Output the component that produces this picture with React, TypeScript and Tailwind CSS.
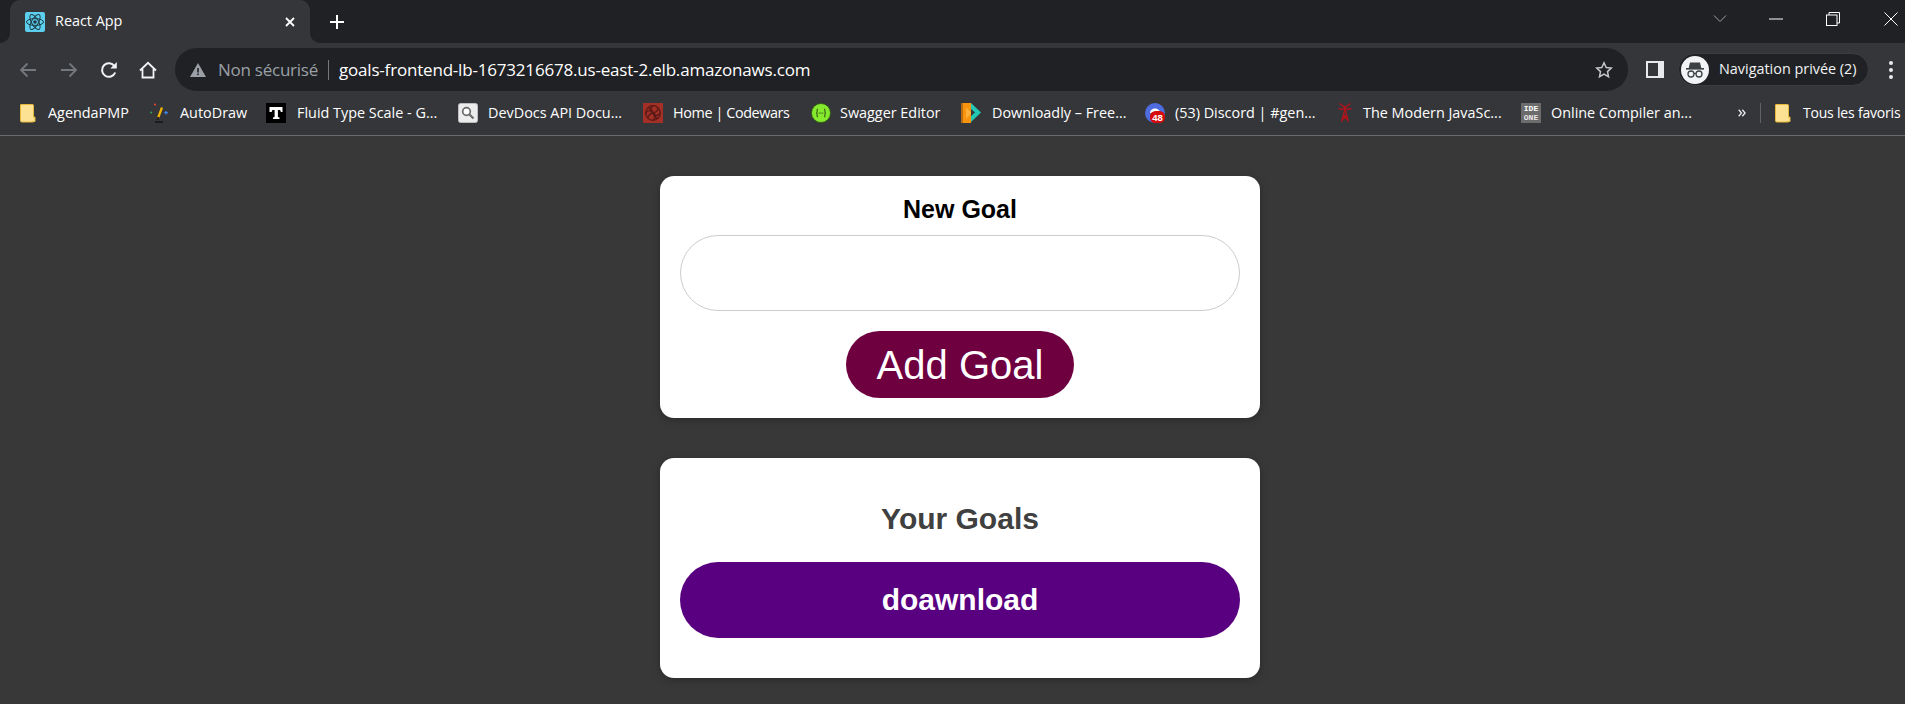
import React from "react";

const ui = "font-['Open_Sans','Noto_Sans',sans-serif]";

function Folder() {
  return (
    <svg width="20" height="20" viewBox="0 0 20 20">
      <path d="M3 1.500h11.500a1 1 0 0 1 1 1V19H3.800A1.300 1.300 0 0 1 2.500 17.700V2a.5.5 0 0 1 .5-.5z" fill="#fde293" stroke="#e8b93b" strokeWidth="1" />
      <path d="M15 14h2v4.500h-3" fill="#fde293" stroke="#e8b93b" strokeWidth="1" />
    </svg>
  );
}

function ReactIcon() {
  return (
    <svg width="20" height="20" viewBox="0 0 20 20">
      <rect width="20" height="20" rx="2" fill="#5ccfee" />
      <g fill="none" stroke="#1f3a44" strokeWidth="1">
        <ellipse cx="10" cy="10" rx="8.500" ry="3.400" />
        <ellipse cx="10" cy="10" rx="8.500" ry="3.400" transform="rotate(60 10 10)" />
        <ellipse cx="10" cy="10" rx="8.500" ry="3.400" transform="rotate(120 10 10)" />
      </g>
      <circle cx="10" cy="10" r="1.800" fill="#1f3a44" />
    </svg>
  );
}

function AutoDrawIcon() {
  return (
    <svg width="20" height="20" viewBox="0 0 20 20">
      <path d="M12 4.500 8 15" stroke="#f5b400" strokeWidth="2.200" />
      <path d="M8.400 14 7.400 17" stroke="#222" strokeWidth="2" />
      <rect x="5" y="18" width="8" height="2" fill="#1c1c1c" />
      <circle cx="5" cy="1.500" r="1.100" fill="#ea4335" />
      <circle cx="1.200" cy="9.500" r="1" fill="#34a853" />
      <path d="M16 8v3.500M14.300 9.700h3.500" stroke="#4285f4" strokeWidth="1.200" />
    </svg>
  );
}

function TIcon() {
  return (
    <svg width="20" height="20" viewBox="0 0 20 20">
      <rect width="20" height="20" fill="#000" />
      <path d="M3.500 4h13v5h-1.600l-.8-2h-2.200v7l1.600.6V16H7v-1.400l1.600-.6V7H6.400l-.8 2H3.500z" fill="#fff" />
    </svg>
  );
}

function DevDocsIcon() {
  return (
    <svg width="20" height="20" viewBox="0 0 20 20">
      <rect x=".5" y=".5" width="19" height="19" rx="2" fill="#ececec" stroke="#bdbdbd" />
      <circle cx="8.500" cy="8.500" r="3.800" fill="#fff" stroke="#6b6b6b" strokeWidth="1.700" />
      <path d="m11.500 11.500 4 4" stroke="#6b6b6b" strokeWidth="2.200" />
    </svg>
  );
}

function CodewarsIcon() {
  return (
    <svg width="20" height="20" viewBox="0 0 20 20">
      <rect width="20" height="20" fill="#a32f27" />
      <g fill="none" stroke="#5a1a16" strokeWidth="1.300">
        <circle cx="10" cy="10" r="7.300" />
        <path d="M10 2.700C6.500 5.500 7 8.500 10 10s3.500 4.500 0 7.300" />
        <path d="M2.700 10C5.500 6.500 8.500 7 10 10s4.500 3.500 7.300 0" />
        <path d="M4.800 4.800C8.500 5 9.500 8 10 10s1.500 5 5.200 5.200" />
        <path d="M15.200 4.800C15 8.500 12 9.500 10 10s-5 1.500-5.200 5.200" />
      </g>
    </svg>
  );
}

function SwaggerIcon() {
  return (
    <svg width="20" height="20" viewBox="0 0 20 20">
      <circle cx="10" cy="10" r="9.500" fill="#85ea2d" stroke="#2f5a12" strokeWidth=".8" />
      <path d="M7 6c-1.200 0-.9 1.300-.9 2.500 0 .9-.4 1.500-.9 1.500.5 0 .9.600.9 1.500 0 1.200-.3 2.500.9 2.500M13 6c1.200 0 .9 1.300.9 2.500 0 .9.400 1.500.9 1.500-.5 0-.9.600-.9 1.500 0 1.200.3 2.500-.9 2.500" fill="none" stroke="#20350e" strokeWidth="1" />
      <circle cx="8.300" cy="10" r=".6" fill="#20350e" />
      <circle cx="10" cy="10" r=".6" fill="#20350e" />
      <circle cx="11.700" cy="10" r=".6" fill="#20350e" />
    </svg>
  );
}

function DownloadlyIcon() {
  return (
    <svg width="20" height="20" viewBox="0 0 20 20">
      <rect x="0" y="0" width="2" height="20" fill="#b96f10" />
      <rect x="2" y="0" width="8" height="20" fill="#f7930d" />
      <path d="M5 4.500 10 9v2l-5 4.500z" fill="#fdb03a" />
      <path d="M10 0l10 9.500L10 19v-6l4-3.500L10 6z" fill="#23c8b4" />
    </svg>
  );
}

function DiscordIcon() {
  return (
    <svg width="20" height="20" viewBox="0 0 20 20">
      <circle cx="10" cy="10" r="10" fill="#4f6be0" />
      <path d="M5 10c0-3 2.500-4.500 5-4.500S15 7 15 10z" fill="#fff" />
      <rect x="5" y="8" width="15" height="12" rx="5.500" fill="#d60a0a" />
      <text x="12.500" y="17.500" fontSize="9.500" fontWeight="700" fill="#fff" textAnchor="middle" fontFamily="Liberation Sans, sans-serif">48</text>
    </svg>
  );
}

function TowerIcon() {
  return (
    <svg width="20" height="20" viewBox="0 0 20 20" fill="none" stroke="#b3131b" strokeWidth="1.300">
      <path d="M10 6 6.500 19M10 6l3.500 13M8 13h4M7 17l5-4M13 17l-5-4" />
      <path d="M9.500 4 4.500.5M10.500 4l5-3.500M8.500 6.500l-5-1M11.500 6.500l5-1" />
      <circle cx="10" cy="5" r="1" fill="#b3131b" />
    </svg>
  );
}

function IdeOneIcon() {
  return (
    <div className="w-5 h-5 bg-[#6c6c6c] flex flex-col items-center justify-center font-['Liberation_Mono',monospace] font-bold text-[8px] leading-[9px] text-white">
      <span>IDE</span>
      <span className="text-[#e6e6e6]">ONE</span>
    </div>
  );
}

const bookmarks: { icon: React.ReactNode; label: string; cls: string }[] = [
  { icon: <Folder />, label: "AgendaPMP", cls: "w-[132px] gap-[10px]" },
  { icon: <AutoDrawIcon />, label: "AutoDraw", cls: "w-[116px] gap-[10px]" },
  { icon: <TIcon />, label: "Fluid Type Scale - G...", cls: "w-[192px] gap-[11px]" },
  { icon: <DevDocsIcon />, label: "DevDocs API Docu...", cls: "w-[185px] gap-[10px]" },
  { icon: <CodewarsIcon />, label: "Home | Codewars", cls: "w-[168px] gap-[10px] tracking-[-0.4px]" },
  { icon: <SwaggerIcon />, label: "Swagger Editor", cls: "w-[150px] gap-[9px]" },
  { icon: <DownloadlyIcon />, label: "Downloadly – Free...", cls: "w-[184px] gap-[11px]" },
  { icon: <DiscordIcon />, label: "(53) Discord | #gen...", cls: "w-[190px] gap-[10px]" },
  { icon: <TowerIcon />, label: "The Modern JavaSc...", cls: "w-[186px] gap-[8px]" },
  { icon: <IdeOneIcon />, label: "Online Compiler an...", cls: "w-[217px] gap-[10px]" },
];

function TabStrip() {
  return (
    <div className="h-[43px] bg-[#202124] flex items-end pl-[10px] relative">
      <div className="relative w-[300px] h-[43px] bg-[#35363a] rounded-t-[10px] flex items-center pl-[15px] pr-[14px] text-white">
        <div className="absolute -left-[10px] bottom-0 w-[10px] h-[10px] bg-[#35363a]">
          <div className="w-full h-full bg-[#202124] rounded-br-[10px]" />
        </div>
        <div className="absolute -right-[10px] bottom-0 w-[10px] h-[10px] bg-[#35363a]">
          <div className="w-full h-full bg-[#202124] rounded-bl-[10px]" />
        </div>
        <ReactIcon />
        <span className="ml-[10px] text-[14.4px] leading-none whitespace-nowrap">React App</span>
        <svg className="ml-auto" width="12" height="12" viewBox="0 0 12 12" stroke="#fff" strokeWidth="1.800">
          <path d="M2 2l8 8M10 2l-8 8" />
        </svg>
      </div>
      <div className="h-[43px] flex items-center ml-[19px]">
        <svg width="16" height="16" viewBox="0 0 16 16" stroke="#fff" strokeWidth="2">
          <path d="M8 1v14M1 8h14" />
        </svg>
      </div>
      <div className="ml-auto h-[37px] flex items-center self-start text-[#e8eaed]">
        <svg width="14" height="8" viewBox="0 0 14 8" fill="none" stroke="#9aa0a6" strokeWidth="1">
          <path d="M1 .5l6 6 6-6" />
        </svg>
        <svg className="ml-[42px]" width="14" height="2" viewBox="0 0 14 2" stroke="#fff" strokeWidth="1">
          <path d="M0 1h14" />
        </svg>
        <svg className="ml-[43px]" width="14" height="14" viewBox="0 0 14 14" fill="none" stroke="#fff" strokeWidth="1">
          <rect x=".5" y="3" width="10.500" height="10.500" />
          <path d="M3 3V.5h10.500V11H11" />
        </svg>
        <svg className="ml-[44px] mr-[7px]" width="14" height="14" viewBox="0 0 14 14" stroke="#fff" strokeWidth="1">
          <path d="M.5.500l13 13M13.500.500l-13 13" />
        </svg>
      </div>
    </div>
  );
}

function Toolbar() {
  return (
    <div className="h-[53px] flex items-center pl-[19px]">
      <svg width="18" height="16" viewBox="0 0 18 16" fill="none" stroke="#74777c" strokeWidth="1.800">
        <path d="M17 8H2M8.500 1.500 2 8l6.500 6.500" />
      </svg>
      <svg className="ml-[23px]" width="18" height="16" viewBox="0 0 18 16" fill="none" stroke="#74777c" strokeWidth="1.800">
        <path d="M1 8h15M9.500 1.500 16 8l-6.500 6.500" />
      </svg>
      <svg className="ml-[22px]" width="18" height="18" viewBox="0 0 18 18" fill="none" stroke="#f1f3f4" strokeWidth="2">
        <path d="M15.200 11.500a6.800 6.800 0 1 1-.7-6.300" />
        <path d="M16.800 1v6.500h-6.500z" fill="#f1f3f4" stroke="none" />
      </svg>
      <svg className="ml-[21px]" width="18" height="18" viewBox="0 0 18 18" fill="none" stroke="#f1f3f4" strokeWidth="1.800">
        <path d="M1 9.500 9 1.800l8 7.700M3.500 8v8.500h11V8" />
      </svg>
      <div className="ml-[18px] w-[1453px] h-[43px] rounded-full bg-[#202124] flex items-center pl-[15px] pr-[15px]">
        <svg className="shrink-0" width="16" height="14" viewBox="0 0 16 14">
          <path d="M8 0l8 14H0z" fill="#9aa0a6" />
          <rect x="7.200" y="5" width="1.600" height="4.500" fill="#202124" />
          <rect x="7.200" y="10.500" width="1.600" height="1.600" fill="#202124" />
        </svg>
        <span className="ml-[12px] text-[17px] leading-none text-[#9aa0a6] whitespace-nowrap tracking-[-0.25px]">Non sécurisé</span>
        <span className="ml-[10px] w-px h-[20px] bg-[#75787c]" />
        <span className="ml-[10px] text-[17px] leading-none text-white whitespace-nowrap tracking-[-0.19px]">goals-frontend-lb-1673216678.us-east-2.elb.amazonaws.com</span>
        <svg className="ml-auto" width="18" height="18" viewBox="0 0 18 18" fill="none" stroke="#c4c7c9" strokeWidth="1.500">
          <path d="M9 1.800l2.200 4.700 5.100.6-3.800 3.500 1 5.100L9 13.200l-4.500 2.500 1-5.100-3.800-3.500 5.100-.6z" />
        </svg>
      </div>
      <svg className="ml-[18px]" width="18" height="17" viewBox="0 0 18 17">
        <rect width="18" height="17" fill="#e8eaed" />
        <rect x="2" y="2" width="10" height="13" fill="#35363a" />
      </svg>
      <div className="ml-[14px] w-[191px] h-[33px] rounded-full bg-[#202124] border border-[#3c3d41] flex items-center pl-[2px]">
        <svg width="28" height="28" viewBox="0 0 28 28">
          <circle cx="14" cy="14" r="14" fill="#f1f3f4" />
          <path d="M9 6.500h10l1.300 5.500H7.700z" fill="#3c4043" />
          <rect x="5" y="12" width="18" height="1.600" fill="#3c4043" />
          <circle cx="10" cy="18" r="3" fill="none" stroke="#3c4043" strokeWidth="1.300" />
          <circle cx="18" cy="18" r="3" fill="none" stroke="#3c4043" strokeWidth="1.300" />
          <path d="M13 17.500h2" stroke="#3c4043" strokeWidth="1.200" />
        </svg>
        <span className="ml-[10px] text-[14.4px] leading-none text-[#f1f3f4] whitespace-nowrap">Navigation privée (2)</span>
      </div>
      <div className="ml-[20px] flex flex-col gap-[3px]">
        <span className="w-[4px] h-[4px] rounded-full bg-[#e8eaed]" />
        <span className="w-[4px] h-[4px] rounded-full bg-[#e8eaed]" />
        <span className="w-[4px] h-[4px] rounded-full bg-[#e8eaed]" />
      </div>
    </div>
  );
}

function Bookmarks() {
  return (
    <div className="h-[40px] border-b border-[#6a6b6e] flex items-center pl-[18px] pb-[5px] text-white text-[14.4px]">
      {bookmarks.map((b) => (
        <div key={b.label} className={`${b.cls} flex items-center shrink-0`}>
          <div className="w-5 h-5 shrink-0">{b.icon}</div>
          <span className="whitespace-nowrap leading-none">{b.label}</span>
        </div>
      ))}
      <svg className="shrink-0" width="8" height="8" viewBox="0 0 8 8" fill="none" stroke="#e8eaed" strokeWidth="1.300">
        <path d="M.7.800 3.500 4 .7 7.200M4.300.800 7.100 4 4.300 7.200" />
      </svg>
      <span className="ml-[14px] w-px h-[20px] bg-[#5f6368] shrink-0" />
      <div className="ml-[12px] flex items-center gap-[10px] shrink-0">
        <div className="w-5 h-5 shrink-0"><Folder /></div>
        <span className="whitespace-nowrap leading-none text-[14px] tracking-[-0.2px]">Tous les favoris</span>
      </div>
    </div>
  );
}

export default function App() {
  return (
    <div className="h-[704px] overflow-hidden bg-[#383838] font-['Liberation_Sans',Arial,sans-serif]">
      <div className={`bg-[#35363a] ${ui}`}>
        <TabStrip />
        <Toolbar />
        <Bookmarks />
      </div>
      <main className="flex flex-col items-center gap-10 pt-10 pl-[15px]">
        <section className="w-[600px] h-[242px] bg-white rounded-[14px] shadow-[0_2px_8px_rgba(0,0,0,0.26)] px-5 pt-5 flex flex-col">
          <h2 className="text-[25px] leading-[26px] font-bold text-black text-center">New Goal</h2>
          <input className="w-full h-[76px] mt-[13px] rounded-full border border-[#ccc] bg-white outline-none" aria-label="New Goal" />
          <button className="self-center mt-5 px-[31px] py-[10px] h-[67px] text-[40px] leading-[46px] text-white bg-[#6f0040] rounded-full">Add Goal</button>
        </section>
        <section className="w-[600px] h-[220px] bg-white rounded-[14px] shadow-[0_2px_8px_rgba(0,0,0,0.26)] px-5 pt-[41px] flex flex-col">
          <h2 className="text-[30px] leading-[40px] font-bold text-[#404040] text-center">Your Goals</h2>
          <div className="mt-[23px] h-[76px] pb-[2px] rounded-full bg-[#58007f] flex items-center justify-center text-[30px] font-bold text-white">doawnload</div>
        </section>
      </main>
    </div>
  );
}
